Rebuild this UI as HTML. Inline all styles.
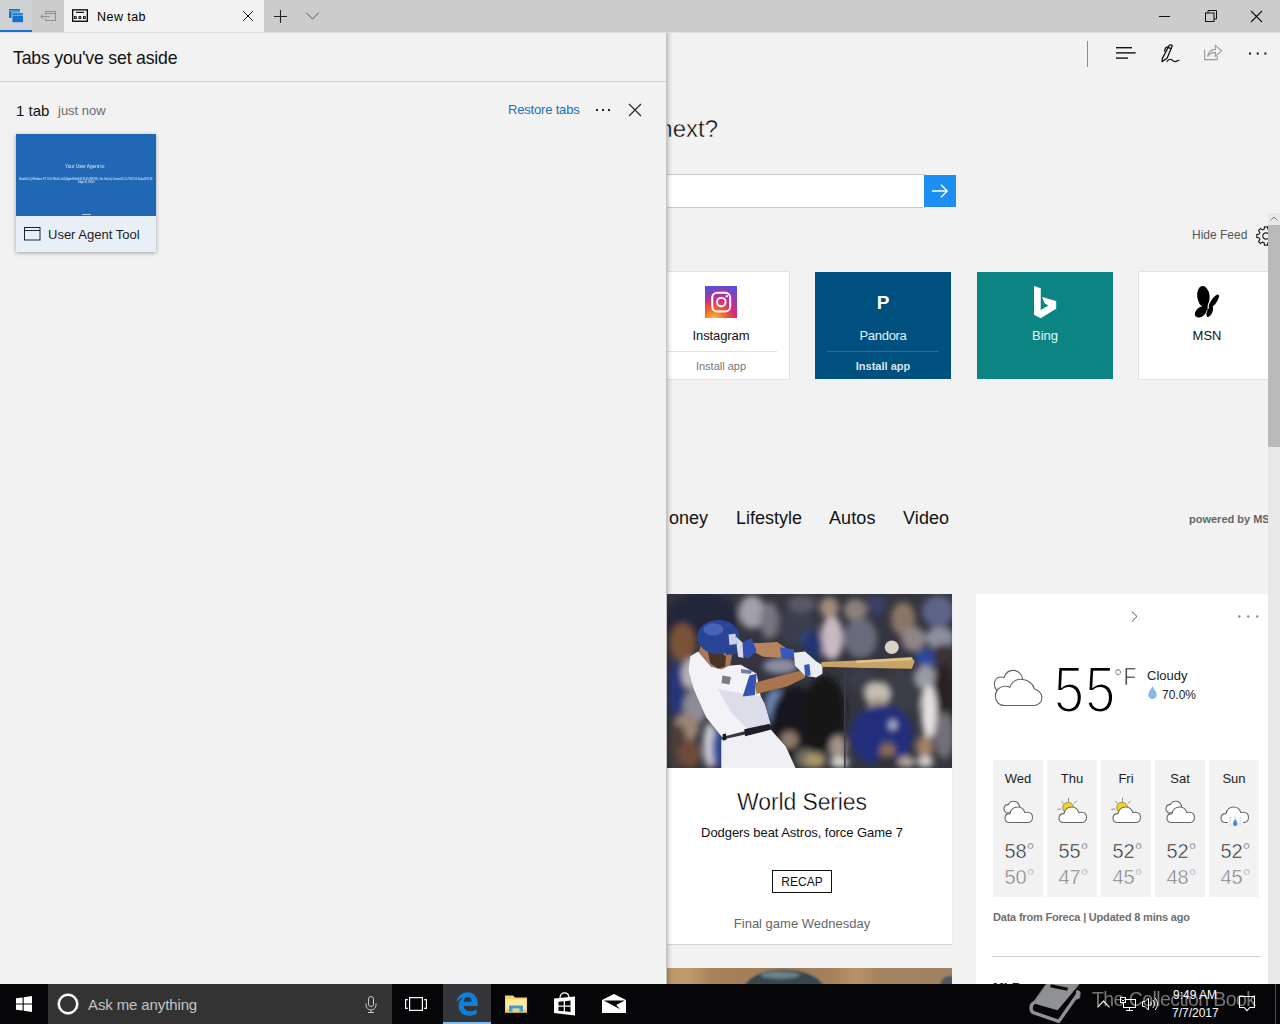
<!DOCTYPE html>
<html lang="en">
<head>
<meta charset="utf-8">
<title>New tab</title>
<style>
*{box-sizing:border-box;margin:0;padding:0}
html,body{width:1280px;height:1024px;overflow:hidden;background:#f2f2f2;font-family:"Liberation Sans",sans-serif;color:#000}
.abs,.t{position:absolute}
.t{white-space:nowrap;line-height:1;transform-origin:0 0}
#titlebar{left:0;top:0;width:1280px;height:32px;background:#cccccc}
#page{left:0;top:0;width:1280px;height:984px;background:#f2f2f2;overflow:hidden}
#panel{left:0;top:33px;width:667px;height:951px;background:#f2f2f2}
#taskbar{left:0;top:984px;width:1280px;height:40px;background:#060608;overflow:hidden}
svg{position:absolute;overflow:visible}
</style>
</head>
<body>

<!-- ================= PAGE (right side, behind panel) ================= -->
<div id="page" class="abs">

<!-- toolbar -->
<div class="abs" style="left:1087px;top:41px;width:1px;height:26px;background:#8a8a8a"></div>
<svg style="left:1116px;top:47px" width="20" height="12" viewBox="0 0 20 12" fill="#111"><rect x="0" y="0" width="16" height="1.4"/><rect x="0" y="5.2" width="19.6" height="1.4"/><rect x="0" y="10.4" width="12" height="1.4"/></svg>
<svg style="left:1161px;top:44px" width="19" height="19" viewBox="0 0 19 19" fill="none" stroke="#111" stroke-width="1.300" stroke-linejoin="round" stroke-linecap="round"><path d="M8.300 1.300C9 0.500 10.800 0.700 11.300 1.800L6.100 14.300L1.100 17.600L1.400 14.400Z"/><path d="M7 3.400L9.900 4.600"/><path d="M6.400 2.900L4.800 3.500L3.500 7"/><path d="M6 17.300C7.500 15.500 9 14.800 10.300 15.600C11.800 16.600 13 18 14.600 17.600C16 17.200 17 16.600 17.900 16.200" stroke-width="1.200"/></svg>
<svg style="left:1203.200px;top:43.400px" width="20" height="18" viewBox="0 0 20 18" fill="none" stroke="#9b9b9b" stroke-width="1.1" stroke-linejoin="miter"><path d="M1.6 6.4V16.6H14.2V13"/><path d="M4.6 13.4C5.4 8.8 8.4 6.6 12.4 6.4V2.4L18.6 7.8L12.4 13.2V9.4C9 9.4 6.6 10.4 4.6 13.4Z"/></svg>
<svg style="left:1249px;top:52px" width="18" height="3" viewBox="0 0 18 3" fill="#111"><rect x="0" y="0.5" width="2" height="2"/><rect x="7.7" y="0.5" width="2" height="2"/><rect x="15.4" y="0.5" width="2" height="2"/></svg>

<!-- where to next -->
<div class="t" id="wtn" style="right:562px;top:117px;font-size:24px;color:#000;-webkit-text-stroke:.45px #f2f2f2">Where to next?</div>
<!-- search box -->
<div class="abs" style="left:312px;top:174px;width:613px;height:34px;background:#fff;border:1px solid #c9c9c9"></div>
<div class="abs" style="left:924px;top:175px;width:32px;height:32px;background:#1e8ff2"></div>
<svg style="left:932px;top:184px" width="16" height="14" viewBox="0 0 16 14" fill="none" stroke="#fff" stroke-width="1.3"><path d="M0 7H15M9 0.8L15.2 7L9 13.2"/></svg>

<!-- hide feed -->
<div class="t" id="hidefeed" style="left:1192px;top:229px;font-size:12px;color:#555">Hide Feed</div>
<svg style="left:1256px;top:225px" width="20" height="22" viewBox="0 0 20 22" fill="none" stroke="#222" stroke-width="1.2"><circle cx="10" cy="11" r="3.2"/><path d="M8.6 1.8h2.8l.5 2.4 1.6.7 2-1.4 2 2-1.4 2 .7 1.6 2.4.5v2.8l-2.4.5-.7 1.6 1.4 2-2 2-2-1.4-1.6.7-.5 2.4H8.600l-.5-2.400-1.600-.7-2 1.400-2-2 1.400-2-.7-1.600-2.400-.5V9.600l2.400-.5.7-1.600-1.400-2 2-2 2 1.400 1.600-.7z"/></svg>

<!-- top sites tiles -->
<div class="abs" style="left:653px;top:271px;width:137px;height:109px;background:#fff;border:1px solid #e2e2e2"></div>
<svg style="left:705px;top:286px" width="32" height="32" viewBox="0 0 32 32">
  <defs>
    <radialGradient id="ig1" cx=".28" cy="1.08" r="1.15"><stop offset="0" stop-color="#fdd36f"/><stop offset=".14" stop-color="#f9a12f"/><stop offset=".34" stop-color="#f15f30"/><stop offset=".58" stop-color="#d82a78"/><stop offset=".82" stop-color="#9a38b4"/><stop offset="1" stop-color="#5a50d2"/></radialGradient>
    <radialGradient id="ig2" cx="0" cy="0" r=".6"><stop offset="0" stop-color="#4f55d8" stop-opacity=".9"/><stop offset="1" stop-color="#4f55d8" stop-opacity="0"/></radialGradient>
  </defs>
  <rect width="32" height="32" fill="url(#ig1)"/><rect width="32" height="32" fill="url(#ig2)"/>
  <rect x="7.200" y="6.800" width="18" height="18.600" rx="5" fill="none" stroke="#fff" stroke-width="2"/>
  <circle cx="16.300" cy="16" r="4.300" fill="none" stroke="#fff" stroke-width="2"/>
  <circle cx="21.800" cy="10.200" r="1.200" fill="#fff"/>
</svg>
<div class="t ctr" id="t_insta" style="left:653px;width:136px;top:329px;font-size:13px;color:#111;text-align:center;letter-spacing:-.1px">Instagram</div>
<div class="abs" style="left:665px;top:351px;width:112px;height:1px;background:#e3e3e3"></div>
<div class="t ctr" id="t_inst1" style="left:653px;width:136px;top:361px;font-size:11px;color:#767676;text-align:center">Install app</div>

<div class="abs" style="left:815px;top:272px;width:136px;height:107px;background:#00507f"></div>
<div class="t ctr" id="t_P" style="left:815px;width:136px;top:293px;font-size:19px;font-weight:bold;color:#fff;text-align:center">P</div>
<div class="t ctr" id="t_pand" style="left:815px;width:136px;top:329px;font-size:13px;color:#e6f1f8;text-align:center;letter-spacing:-.3px">Pandora</div>
<div class="abs" style="left:827px;top:351px;width:112px;height:1px;background:#2d6d95"></div>
<div class="t ctr" id="t_inst2" style="left:815px;width:136px;top:361px;font-size:11px;font-weight:bold;color:#d5e4ee;text-align:center">Install app</div>

<div class="abs" style="left:977px;top:272px;width:136px;height:107px;background:#0c8484"></div>
<svg style="left:1033.800px;top:285.800px" width="23" height="33" viewBox="0 0 23 33" fill="#fff"><path d="M0 0L6.800 2.200L6.700 23.900L14.400 19.500L10.600 17.300L8 11L22.200 15.100V22.700L6.600 32.200L0 28.800Z"/></svg>
<div class="t ctr" id="t_bing" style="left:977px;width:136px;top:329px;font-size:13px;color:#e8f6f6;text-align:center">Bing</div>

<div class="abs" style="left:1138px;top:271px;width:137px;height:109px;background:#fff;border:1px solid #e2e2e2"></div>
<svg style="left:1195px;top:286px" width="24" height="32" viewBox="0 0 24 32" fill="#000"><ellipse cx="8.400" cy="10.200" rx="6.200" ry="10.300" transform="rotate(-7 8.400 10.200)"/><path d="M4 17L12.800 8L12.600 24.500L9.500 24Z"/><ellipse cx="5.700" cy="26" rx="6.600" ry="4.500" transform="rotate(-40 5.700 26)"/><ellipse cx="18.900" cy="15.300" rx="8" ry="2.700" transform="rotate(-54 18.900 15.300)"/><ellipse cx="14.800" cy="25.600" rx="5.800" ry="2.600" transform="rotate(-66 14.800 25.600)"/></svg>
<div class="t ctr" id="t_msn" style="left:1139px;width:136px;top:329px;font-size:13px;color:#111;text-align:center">MSN</div>

<!-- news nav -->
<div class="t" id="n_money" style="right:572px;top:508.500px;font-size:18px;color:#111"><span style="margin-right:3px">M</span>oney</div>
<div class="t" id="n_life" style="left:736px;top:508.500px;font-size:18px;color:#111">Lifestyle</div>
<div class="t" id="n_autos" style="left:829px;top:508.500px;font-size:18px;color:#111;letter-spacing:.1px">Autos</div>
<div class="t" id="n_video" style="left:903px;top:508.500px;font-size:18px;color:#111;letter-spacing:.1px">Video</div>
<div class="t" id="n_pow" style="left:1189px;top:514px;font-size:11px;font-weight:bold;color:#666">powered by MSN</div>

<!-- news card 1 -->
<div class="abs" style="left:652px;top:594px;width:300px;height:350px;background:#fff;box-shadow:0 1px 1px rgba(0,0,0,.12)"></div>
<svg style="left:652px;top:594px" width="300" height="174" viewBox="0 0 300 174">
<defs><filter id="bl3" x="-10%" y="-10%" width="120%" height="120%"><feGaussianBlur stdDeviation="3"/></filter><filter id="bl1" x="-5%" y="-5%" width="110%" height="110%"><feGaussianBlur stdDeviation=".6"/></filter><clipPath id="cp1"><rect width="300" height="174"/></clipPath></defs>
<g clip-path="url(#cp1)"><rect width="300" height="174" fill="#34353f"/>
<g filter="url(#bl3)"><ellipse cx="50.5" cy="24.1" rx="36.5" ry="26.1" fill="#23263a"/><ellipse cx="30.5" cy="48.4" rx="13.0" ry="19.1" fill="#7a5238"/><ellipse cx="24.4" cy="95.3" rx="8.7" ry="27.9" fill="#27367a"/><ellipse cx="39.2" cy="79.7" rx="9.6" ry="15.6" fill="#b9b3b8"/><ellipse cx="43.5" cy="112.7" rx="12.2" ry="17.4" fill="#8f8c98"/><ellipse cx="100.0" cy="18.0" rx="13.0" ry="16.5" fill="#a3a0a8"/><ellipse cx="117.5" cy="26.6" rx="9.5" ry="18.2" fill="#77757f"/><ellipse cx="144.3" cy="32.8" rx="19.1" ry="17.4" fill="#3a3c50"/><ellipse cx="149.8" cy="10.2" rx="14.2" ry="8.7" fill="#5a5866"/><ellipse cx="157.4" cy="46.7" rx="7.8" ry="8.7" fill="#2b4696"/><ellipse cx="128.7" cy="71.9" rx="17.4" ry="7.8" fill="#8d8fa6"/><ellipse cx="123.5" cy="113.6" rx="10.4" ry="18.3" fill="#6d87b6"/><ellipse cx="144.3" cy="132.8" rx="26.1" ry="40.8" fill="#17171d"/><ellipse cx="34.0" cy="133.6" rx="13.0" ry="13.9" fill="#9a8474"/><ellipse cx="25.3" cy="151.8" rx="9.6" ry="21.8" fill="#4b3d38"/><ellipse cx="37.5" cy="159.6" rx="11.3" ry="14.0" fill="#6f4c3a"/><ellipse cx="57.9" cy="151.0" rx="6.5" ry="22.6" fill="#cfcfd6"/><ellipse cx="66.2" cy="154.4" rx="6.1" ry="19.1" fill="#2f4a9e"/><ellipse cx="137.4" cy="145.8" rx="8.7" ry="8.7" fill="#8f7a6a"/><ellipse cx="153.3" cy="164.0" rx="10.7" ry="9.6" fill="#6b675e"/><ellipse cx="177.2" cy="13.7" rx="9.6" ry="10.5" fill="#a38a7c"/><ellipse cx="179.8" cy="44.0" rx="11.3" ry="21.8" fill="#c9b9c3"/><ellipse cx="161.6" cy="51.9" rx="9.5" ry="13.9" fill="#24366f"/><ellipse cx="203.3" cy="16.2" rx="11.3" ry="11.2" fill="#8d8078"/><ellipse cx="208.5" cy="44.1" rx="16.5" ry="20.0" fill="#6a6a7c"/><ellipse cx="224.1" cy="11.1" rx="9.5" ry="9.6" fill="#3a3f6a"/><ellipse cx="251.1" cy="24.9" rx="12.1" ry="16.6" fill="#8a7666"/><ellipse cx="261.5" cy="45.0" rx="12.2" ry="12.2" fill="#8f8486"/><ellipse cx="286.1" cy="17.1" rx="15.9" ry="15.6" fill="#5f6488"/><ellipse cx="287.9" cy="44.1" rx="14.2" ry="11.3" fill="#8d8fa0"/><ellipse cx="274.5" cy="64.0" rx="11.3" ry="8.7" fill="#2a48a0"/><ellipse cx="291.3" cy="60.5" rx="10.7" ry="10.4" fill="#3a3036"/><ellipse cx="250.2" cy="97.1" rx="23.5" ry="22.6" fill="#3b3c44"/><ellipse cx="273.6" cy="83.2" rx="10.5" ry="12.1" fill="#9b9ba6"/><ellipse cx="172.8" cy="119.7" rx="20.8" ry="38.2" fill="#131318"/><ellipse cx="209.3" cy="84.9" rx="15.7" ry="10.4" fill="#3a3c48"/><ellipse cx="225.0" cy="99.7" rx="13.0" ry="11.3" fill="#c3bfb4"/><ellipse cx="225.0" cy="111.8" rx="9.6" ry="7.9" fill="#a89686"/><ellipse cx="229.8" cy="141.4" rx="31.7" ry="30.4" fill="#222e7c"/><ellipse cx="240.7" cy="131.0" rx="3.8" ry="4.7" fill="#b9c0e0"/><ellipse cx="291.9" cy="103.2" rx="11.3" ry="33.9" fill="#2a2022"/><ellipse cx="277.1" cy="118.3" rx="7.8" ry="27.3" fill="#e4e0e0"/><ellipse cx="292.2" cy="141.4" rx="9.8" ry="23.5" fill="#717078"/><ellipse cx="185.9" cy="153.6" rx="8.7" ry="12.1" fill="#a39388"/><ellipse cx="187.6" cy="168.3" rx="9.5" ry="5.2" fill="#d8d4d0"/><ellipse cx="162.8" cy="166.2" rx="10.8" ry="7.4" fill="#a89868"/><ellipse cx="235.4" cy="145.8" rx="9.5" ry="6.1" fill="#26357a"/><ellipse cx="235.4" cy="157.1" rx="7.9" ry="7.9" fill="#8a6a58"/><ellipse cx="235.4" cy="167.5" rx="13.9" ry="6.1" fill="#30323c"/><ellipse cx="272.8" cy="152.7" rx="8.7" ry="11.3" fill="#a08068"/><ellipse cx="273.2" cy="167.5" rx="8.2" ry="6.1" fill="#d2cec9"/><ellipse cx="254.6" cy="167.9" rx="8.6" ry="5.6" fill="#b3a79c"/></g>
<g filter="url(#bl1)"><rect x="192.0" y="74.5" width="1.600" height="100" fill="#3c3c46"/><polygon points="69.3,145.7 118.3,135.0 133.9,152.7 143.5,173.9 69.3,173.9" fill="#f0f0f4"/><polygon points="36.6,76.2 38.3,62.3 46.2,57.4 59.5,73.1 88.7,70.7 104.7,79.7 108.7,102.3 112.2,109.2 118.6,130.5 70.0,143.1 54.3,123.5 41.8,95.3" fill="#f3f3f7"/><polygon points="66.1,95.3 107.9,102.3 112.2,109.2 118.3,130.1 95.7,135.3 80.1,119.7" fill="#dcdde8"/><polygon points="97.4,81.4 104.7,79.7 103.0,100.9 90.8,102.6" fill="#3553b0"/><polygon points="70.500,81.500 79,83 77.500,90.500 69.500,89" fill="#7a7a88"/><polygon points="89,75 100,76.500 99,80 89,79" fill="#6f7cae"/><polygon points="70.5,140.2 74.0,139.5 74.5,145.7 71.0,146.8" fill="#1c1e28"/><polygon points="92.2,135.3 117.6,129.8 118.6,135.7 93.1,142.3" fill="#1c1e28"/><polygon points="100.9,49.3 125.2,48.1 136.0,55.4 134.3,64.1 111.3,62.7 102.6,58.3" fill="#b5855e"/><polygon points="103.5,88.4 151.3,75.9 153.4,83.5 135.7,92.2 104.4,100.0" fill="#a8744e"/><polygon points="90.5,48.4 99.5,44.2 104.7,57.1 96.0,64.4 90.5,62.3" fill="#3050b0"/><polygon points="127.9,53.3 142.1,55.4 143.0,63.5 129.6,64.4" fill="#3459c4"/><polygon points="48.8,50.1 66.1,55.4 80.1,60.6 78.3,71.0 69.6,75.4 59.5,73.1 47.0,58.0" fill="#a87858"/><polygon points="55.7,57.1 66.1,56.2 74.0,62.3 73.1,72.7 66.1,74.5 58.3,69.3" fill="#4a3428"/><ellipse cx="66.3" cy="43.0" rx="21.1" ry="17.1" fill="#2c4596"/><polygon points="71.4,55.4 90.5,50.1 91.4,58.8 74.8,60.9" fill="#2a408c"/><ellipse cx="61.4" cy="35.4" rx="10.0" ry="6.1" fill="#4662b6"/><polygon points="76.6,40.6 83.5,39.7 84.4,50.1 77.4,51.0" fill="#c9cfe4"/><polygon points="83.5,42.3 90.5,48.4 91.4,64.1 86.1,62.7" fill="#d5d8e6"/><polygon points="141.8,58.8 153.1,57.6 164.0,67.2 170.4,71.0 170.4,79.7 164.0,83.5 153.1,81.8 143.0,71.4" fill="#ecedf3"/><polygon points="152.2,71.0 157.4,70.1 158.6,81.4 153.1,82.3" fill="#3456b8"/><polygon points="169.4,67.9 204.1,66.5 259.8,63.0 262.6,67.5 259.8,74.7 204.1,73.8 169.4,72.7" fill="#c9a468"/><polygon points="204.1,66.8 258.9,63.7 260.1,66.1 204.1,68.9" fill="#e2c78c"/><ellipse cx="239.8" cy="53.3" rx="7" ry="6.800" fill="#dbd2c6"/></g>
</g></svg>

<div class="t" id="c_ws" style="left:652px;width:300px;text-align:center;top:790.500px;font-size:23px;color:#000;letter-spacing:-.12px;-webkit-text-stroke:.4px #fff">World Series</div>
<div class="t" id="c_sub" style="left:652px;width:300px;text-align:center;top:826px;font-size:13px;color:#111;letter-spacing:-.06px">Dodgers beat Astros, force Game 7</div>
<div class="abs" style="left:772px;top:870px;width:60px;height:23px;border:1px solid #111"></div>
<div class="t" id="c_recap" style="left:772px;width:60px;text-align:center;top:876px;font-size:12px;color:#111">RECAP</div>
<div class="t" id="c_final" style="left:652px;width:300px;text-align:center;top:917px;font-size:13px;color:#666">Final game Wednesday</div>
<!-- news card 2 (cut off) -->
<div class="abs" style="left:652px;top:968px;width:300px;height:20px;background:linear-gradient(to right,#b89468 0,#c09a6c 12%,#a98259 20%,#9c7a58 45%,#a5825c 60%,#b8946a 68%,#a5845f 75%,#a08060 100%);overflow:hidden">
  <div class="abs" style="left:92px;top:2px;width:80px;height:40px;border-radius:50% 50% 0 0;background:#37474d;filter:blur(1.200px)"></div>
  <div class="abs" style="left:108px;top:3px;width:40px;height:8px;border-radius:50%;background:#6b8288;filter:blur(1.500px)"></div>
  <div class="abs" style="left:288px;top:8px;width:20px;height:20px;border-radius:50%;background:#4a5a5e;filter:blur(1px)"></div>
</div>

<!-- weather card -->
<div class="abs" style="left:976px;top:594px;width:292px;height:400px;background:#fff"></div>
<svg style="left:1131px;top:611px" width="7" height="11" viewBox="0 0 7 11" fill="none" stroke="#555" stroke-width="1"><path d="M0.8 0.500L6 5.500L0.8 10.500"/></svg>
<svg style="left:1238px;top:615px" width="21" height="3" viewBox="0 0 21 3" fill="#8c8c8c"><circle cx="1.300" cy="1.500" r="1.200"/><circle cx="10.200" cy="1.500" r="1.200"/><circle cx="19.200" cy="1.500" r="1.200"/></svg>
<svg style="left:993px;top:669px" width="50" height="38" viewBox="0 0 50 38" fill="#fff" stroke="#646464" stroke-width="1.100"><path d="M3.800 21.600C1.800 19.500 1.300 17 1.300 15C1.300 11 4 8 7.500 8C8.800 8 10 8.200 11.100 8.500C12.500 4.200 16 1.400 20 1.400C25 1.400 29 5 29.700 9.900L20 20Z"/><path d="M11.100 36.500C5.500 36.500 2.400 32 2.400 27C2.400 21 7 17 12.500 17.200C14.500 17.200 16 17.700 16.900 18.300C18.500 13.500 22.500 10.200 27.800 10.200C34.500 10.200 40 14.500 41.500 20C46 21.500 48.900 24.500 48.900 28.700C48.900 33 45.500 36.500 41.200 36.500Z"/></svg>
<div class="t" id="w_55" style="left:1054px;top:657px;font-size:65px;color:#000;-webkit-text-stroke:2.200px #fff;letter-spacing:1.500px;transform:scaleX(.83)">55</div>
<div class="t" id="w_f" style="left:1114px;top:665px;font-size:24px;color:#222;-webkit-text-stroke:.6px #fff;transform:scaleX(.86);letter-spacing:1.500px">°F</div>
<div class="t" id="w_cloudy" style="left:1147px;top:669px;font-size:13px;color:#222">Cloudy</div>
<svg style="left:1148px;top:686px" width="9" height="13" viewBox="0 0 9 13" fill="#8bb6ea"><path d="M4.500 0C6 3.500 8.800 6 8.800 8.600A4.300 4.300 0 0 1 0.200 8.600C0.200 6 3 3.500 4.500 0Z"/></svg>
<div class="t" id="w_pct" style="left:1162px;top:689px;font-size:12px;color:#222">70.0%</div>
<div class="abs" style="left:993px;top:760px;width:50px;height:137px;background:#f2f2f2"></div>
<div class="t fd" id="fd0" style="left:993px;width:50px;text-align:center;top:772px;font-size:13px;color:#222">Wed</div>
<svg style="left:993px;top:796px" width="50" height="32" viewBox="0 0 50 32"><path d="M13.400 17C11.200 15.400 10.600 13.200 11.200 11.400C11.800 9.500 13.600 8.500 15.300 8.700C16.100 6.400 18.200 5.200 20.600 5.200C23.600 5.200 26 7.400 26.600 10.600L26.600 16Z" fill="#fff" stroke="#666" stroke-width="1.100"/><path d="M16.500 26.500C13 26.500 12 24 12 22.300C12 19.500 14 17.600 17 17.600C17.800 13.500 21 11 24.500 11C28.500 11 31 13.500 31.800 16.600C32.600 16.300 33.600 16.200 34.500 16.200C37.500 16.200 39.500 18.500 39.500 21.500C39.500 24.300 37.500 26.500 34.800 26.500Z" fill="#fff" stroke="#666" stroke-width="1.100"/></svg>
<div class="t fh" id="fh0" style="left:993px;width:50px;text-align:center;top:841px;font-size:20px;color:#222;-webkit-text-stroke:.5px #f2f2f2;padding-left:3px">58°</div>
<div class="t fl" id="fl0" style="left:993px;width:50px;text-align:center;top:867px;font-size:20px;color:#777;-webkit-text-stroke:.5px #f2f2f2;padding-left:3px">50°</div>
<div class="abs" style="left:1047px;top:760px;width:50px;height:137px;background:#f2f2f2"></div>
<div class="t fd" id="fd1" style="left:1047px;width:50px;text-align:center;top:772px;font-size:13px;color:#222">Thu</div>
<svg style="left:1047px;top:796px" width="50" height="32" viewBox="0 0 50 32"><g stroke="#8c8c8c" stroke-width="1" fill="none" stroke-linecap="round"><path d="M21.500 2.200V5.400M14.600 5.400L16.400 7.300M27.200 7.300L29.300 5.200M10.600 13.400L13.800 13"/></g><circle cx="21.100" cy="11.600" r="5.400" fill="#f2d21f" stroke="#8f8a4a" stroke-width=".9"/><path d="M16.500 26.500C13 26.500 12 24 12 22.300C12 19.500 14 17.600 17 17.600C17.800 13.500 21 11 24.500 11C28.500 11 31 13.500 31.800 16.600C32.600 16.300 33.600 16.200 34.500 16.200C37.500 16.200 39.500 18.500 39.500 21.500C39.500 24.300 37.500 26.500 34.800 26.500Z" fill="#fff" stroke="#666" stroke-width="1.100"/></svg>
<div class="t fh" id="fh1" style="left:1047px;width:50px;text-align:center;top:841px;font-size:20px;color:#222;-webkit-text-stroke:.5px #f2f2f2;padding-left:3px">55°</div>
<div class="t fl" id="fl1" style="left:1047px;width:50px;text-align:center;top:867px;font-size:20px;color:#777;-webkit-text-stroke:.5px #f2f2f2;padding-left:3px">47°</div>
<div class="abs" style="left:1101px;top:760px;width:50px;height:137px;background:#f2f2f2"></div>
<div class="t fd" id="fd2" style="left:1101px;width:50px;text-align:center;top:772px;font-size:13px;color:#222">Fri</div>
<svg style="left:1101px;top:796px" width="50" height="32" viewBox="0 0 50 32"><g stroke="#8c8c8c" stroke-width="1" fill="none" stroke-linecap="round"><path d="M21.500 2.200V5.400M14.600 5.400L16.400 7.300M27.200 7.300L29.300 5.200M10.600 13.400L13.800 13"/></g><circle cx="21.100" cy="11.600" r="5.400" fill="#f2d21f" stroke="#8f8a4a" stroke-width=".9"/><path d="M16.500 26.500C13 26.500 12 24 12 22.300C12 19.500 14 17.600 17 17.600C17.800 13.500 21 11 24.500 11C28.500 11 31 13.500 31.800 16.600C32.600 16.300 33.600 16.200 34.500 16.200C37.500 16.200 39.500 18.500 39.500 21.500C39.500 24.300 37.500 26.500 34.800 26.500Z" fill="#fff" stroke="#666" stroke-width="1.100"/></svg>
<div class="t fh" id="fh2" style="left:1101px;width:50px;text-align:center;top:841px;font-size:20px;color:#222;-webkit-text-stroke:.5px #f2f2f2;padding-left:3px">52°</div>
<div class="t fl" id="fl2" style="left:1101px;width:50px;text-align:center;top:867px;font-size:20px;color:#777;-webkit-text-stroke:.5px #f2f2f2;padding-left:3px">45°</div>
<div class="abs" style="left:1155px;top:760px;width:50px;height:137px;background:#f2f2f2"></div>
<div class="t fd" id="fd3" style="left:1155px;width:50px;text-align:center;top:772px;font-size:13px;color:#222">Sat</div>
<svg style="left:1155px;top:796px" width="50" height="32" viewBox="0 0 50 32"><path d="M13.400 17C11.200 15.400 10.600 13.200 11.200 11.400C11.800 9.500 13.600 8.500 15.300 8.700C16.100 6.400 18.200 5.200 20.600 5.200C23.600 5.200 26 7.400 26.600 10.600L26.600 16Z" fill="#fff" stroke="#666" stroke-width="1.100"/><path d="M16.500 26.500C13 26.500 12 24 12 22.300C12 19.500 14 17.600 17 17.600C17.800 13.500 21 11 24.500 11C28.500 11 31 13.500 31.800 16.600C32.600 16.300 33.600 16.200 34.500 16.200C37.500 16.200 39.500 18.500 39.500 21.500C39.500 24.300 37.500 26.500 34.800 26.500Z" fill="#fff" stroke="#666" stroke-width="1.100"/></svg>
<div class="t fh" id="fh3" style="left:1155px;width:50px;text-align:center;top:841px;font-size:20px;color:#222;-webkit-text-stroke:.5px #f2f2f2;padding-left:3px">52°</div>
<div class="t fl" id="fl3" style="left:1155px;width:50px;text-align:center;top:867px;font-size:20px;color:#777;-webkit-text-stroke:.5px #f2f2f2;padding-left:3px">48°</div>
<div class="abs" style="left:1209px;top:760px;width:50px;height:137px;background:#f2f2f2"></div>
<div class="t fd" id="fd4" style="left:1209px;width:50px;text-align:center;top:772px;font-size:13px;color:#222">Sun</div>
<svg style="left:1209px;top:796px" width="50" height="32" viewBox="0 0 50 32"><path d="M16.500 26.500C13 26.500 12 24 12 22.300C12 19.500 14 17.600 17 17.600C17.800 13.500 21 11 24.500 11C28.500 11 31 13.500 31.800 16.600C32.600 16.300 33.600 16.200 34.500 16.200C37.500 16.200 39.500 18.500 39.500 21.500C39.500 24.300 37.500 26.500 34.800 26.500Z" fill="#fff" stroke="#666" stroke-width="1.100"/><rect x="19" y="24" width="15" height="4" fill="#fff"/><g fill="#9cc4ea"><rect x="20.500" y="21" width="1.200" height="1.600"/><rect x="20.500" y="24" width="1.200" height="1.600"/><rect x="20.500" y="27" width="1.200" height="1.600"/><rect x="25.600" y="20.500" width="1.200" height="1.400"/><rect x="30.600" y="21" width="1.200" height="1.600"/><rect x="30.600" y="24" width="1.200" height="1.600"/><rect x="30.600" y="27" width="1.200" height="1.600"/></g><path d="M26.200 22.600C27.200 25 28.500 26.200 28.500 27.700A2.300 2.300 0 0 1 23.900 27.700C23.900 26.200 25.200 25 26.200 22.600Z" fill="#4a90cc"/></svg>
<div class="t fh" id="fh4" style="left:1209px;width:50px;text-align:center;top:841px;font-size:20px;color:#222;-webkit-text-stroke:.5px #f2f2f2;padding-left:3px">52°</div>
<div class="t fl" id="fl4" style="left:1209px;width:50px;text-align:center;top:867px;font-size:20px;color:#777;-webkit-text-stroke:.5px #f2f2f2;padding-left:3px">45°</div>

<div class="t" id="w_data" style="left:993px;top:912px;font-size:11px;font-weight:bold;color:#707070;letter-spacing:-.2px">Data from Foreca | Updated 8 mins ago</div>
<div class="abs" style="left:992px;top:956px;width:268px;height:1px;background:#cfcfcf"></div>
<div class="t" id="w_mlb" style="left:993px;top:981px;font-size:13px;font-weight:bold;color:#222">MLB</div>

<!-- scrollbar -->
<div class="abs" style="left:1268px;top:213px;width:12px;height:771px;background:#e8e8e8"></div>
<div class="abs" style="left:1268px;top:225px;width:12px;height:222px;background:#b9b9b9"></div>
<svg style="left:1270px;top:216px" width="8" height="5" viewBox="0 0 8 5" fill="none" stroke="#777" stroke-width="1"><path d="M0.500 4.500L4 1L7.500 4.500"/></svg>
<!--PAGE-->
</div>

<!-- ================= TITLE BAR ================= -->
<div id="titlebar" class="abs">

<div class="abs" style="left:0;top:0;width:32px;height:32px;background:#cfd2d5"></div>
<div class="abs" style="left:0;top:30px;width:32px;height:2px;background:#1272cf"></div>
<!-- set-aside tabs icon -->
<svg style="left:8px;top:8px" width="16" height="16" viewBox="0 0 16 16">
  <rect x="1" y="1" width="11" height="9" fill="#1272cf"/>
  <rect x="1" y="2.6" width="11" height="1" fill="#7db6ea"/>
  <rect x="3.6" y="4.4" width="12" height="10.2" fill="#cfd2d5"/>
  <rect x="4.4" y="5.2" width="10.6" height="9" fill="#1272cf"/>
  <rect x="4.4" y="6.8" width="10.6" height="1" fill="#7db6ea"/>
</svg>
<!-- set tabs aside icon (disabled) -->
<svg style="left:40px;top:10px" width="16" height="14" viewBox="0 0 16 14" fill="none" stroke="#8d8d8d" stroke-width="1">
  <path d="M5.500 4.500V1.500H15.500V10.500H5.500V8.500M5.500 3.500H15.500"/>
  <path d="M9.500 6.500H0.800M3 4.300L0.800 6.500L3 8.700"/>
</svg>
<!-- active tab -->
<div class="abs" style="left:64px;top:0;width:200px;height:33px;background:#f2f2f2"></div>
<svg style="left:72px;top:9px" width="17" height="14" viewBox="0 0 17 14">
  <rect x="0.650" y="0.850" width="14.700" height="11.400" fill="none" stroke="#000" stroke-width="1.300"/>
  <rect x="4" y="2.800" width="8" height="1.100" fill="#000"/>
  <g fill="#000"><rect x="2" y="7.200" width="2.700" height="2.700"/><rect x="6.500" y="7.200" width="2.700" height="2.700"/><rect x="11" y="7.200" width="2.700" height="2.700"/></g>
  <g fill="#d8d8d8"><rect x="2.900" y="8.100" width=".9" height=".9"/><rect x="7.400" y="8.100" width=".9" height=".9"/><rect x="11.900" y="8.100" width=".9" height=".9"/></g>
</svg>
<div class="t" id="newtab" style="left:97px;top:11px;font-size:12.5px;letter-spacing:.45px">New tab</div>
<svg style="left:243px;top:11px" width="10" height="10" viewBox="0 0 10 10" stroke="#222" stroke-width="1" fill="none"><path d="M0 0L10 10M10 0L0 10"/></svg>
<svg style="left:274px;top:10px" width="13" height="13" viewBox="0 0 13 13" stroke="#222" stroke-width="1.1" fill="none"><path d="M6.5 0V13M0 6.5H13"/></svg>
<svg style="left:306px;top:12px" width="13" height="8" viewBox="0 0 13 8" stroke="#555" stroke-width="1" fill="none"><path d="M0.3 0.8L6.5 7L12.7 0.8"/></svg>
<!-- window controls -->
<svg style="left:1159px;top:16px" width="11" height="1" viewBox="0 0 11 1"><rect width="11" height="1" fill="#111"/></svg>
<svg style="left:1205px;top:10px" width="12" height="12" viewBox="0 0 12 12" fill="none" stroke="#111" stroke-width="1"><rect x="0.5" y="3" width="8.5" height="8.5"/><path d="M3 3V0.5H11.5V9H9"/></svg>
<svg style="left:1251px;top:11px" width="11" height="11" viewBox="0 0 11 11" stroke="#111" stroke-width="1.1" fill="none"><path d="M0 0L11 11M11 0L0 11"/></svg>
<!--TITLEBAR-->
</div>
<div class="abs" style="left:0;top:32px;width:1280px;height:1px;background:#dedede"></div>

<!-- ================= SET ASIDE PANEL ================= -->
<div id="panel" class="abs">

<div class="t" id="p_title" style="left:13px;top:17px;font-size:17.700px;color:#111;letter-spacing:-.2px">Tabs you've set aside</div>
<div class="abs" style="left:0;top:48px;width:667px;height:1px;background:#cfcfcf"></div>
<div class="t" id="p_1tab" style="left:16px;top:70px;font-size:15px;color:#111">1 tab</div>
<div class="t" id="p_just" style="left:58px;top:71px;font-size:13px;color:#6a6a6a">just now</div>
<div class="t" id="p_restore" style="left:508px;top:70px;font-size:13px;color:#1a6fb5;letter-spacing:-.18px">Restore tabs</div>
<svg style="left:596px;top:76px" width="14" height="2" viewBox="0 0 14 2" fill="#222"><rect x="0" y="0" width="2" height="2"/><rect x="6" y="0" width="2" height="2"/><rect x="12" y="0" width="2" height="2"/></svg>
<svg style="left:629px;top:71px" width="12" height="12" viewBox="0 0 12 12" stroke="#222" stroke-width="1.1" fill="none"><path d="M0 0L12 12M12 0L0 12"/></svg>
<!-- thumbnail card -->
<div class="abs" style="left:16px;top:101px;width:140px;height:118px;background:#e8eff7;box-shadow:0 1px 4px rgba(0,0,0,.35)">
  <div class="abs" style="left:0;top:0;width:140px;height:82px;background:#2067b5;overflow:hidden">
    <div class="t" id="th1" style="left:49.300px;top:30.100px;font-size:40px;color:#e4eefa;transform:scale(.1175)">Your User Agent is:</div>
    <div class="t" id="th2" style="left:2.750px;top:42.500px;font-size:40px;color:#eaf2fb;transform:scale(.061,.085)">Mozilla/5.0 (Windows NT 10.0; Win64; x64) AppleWebKit/537.36 (KHTML, like Gecko) Chrome/52.0.2743.116 Safari/537.36</div>
    <div class="t" id="th3" style="left:61.600px;top:46.100px;font-size:40px;color:#eaf2fb;transform:scale(.061,.085)">Edge/15.15063</div>
    <div class="abs" style="left:66px;top:80px;width:9px;height:1px;background:#a9c9ea"></div>
  </div>
  <svg style="left:8px;top:93px" width="17" height="14" viewBox="0 0 17 14" fill="none" stroke="#1c2430" stroke-width="1"><rect x="0.5" y="0.5" width="15.5" height="12.5"/><path d="M0.5 3.5H16"/></svg>
  <div class="t" id="p_uat" style="left:32px;top:94px;font-size:13px;color:#1a1d26">User Agent Tool</div>
</div>
<div class="abs" style="left:666px;top:0;width:1px;height:951px;background:#c4c4c4"></div>
<div class="abs" style="left:667px;top:0;width:6px;height:951px;background:linear-gradient(to right,rgba(0,0,0,.2),rgba(0,0,0,.07) 40%,rgba(0,0,0,0))"></div>
<!--PANEL-->
</div>

<!-- ================= TASKBAR ================= -->
<div id="taskbar" class="abs">

<svg style="left:16px;top:12px" width="16" height="16" viewBox="0 0 16 16" fill="#fff"><path d="M0 2.300L6.600 1.400V7.450H0ZM7.700 1.250L16 0V7.450H7.700ZM0 8.550H6.600V14.600L0 13.700ZM7.700 8.550H16V16L7.700 14.750Z"/></svg>
<div class="abs" style="left:48px;top:0;width:344px;height:40px;background:#333333"></div>
<svg style="left:57px;top:9px" width="22" height="22" viewBox="0 0 22 22" fill="none"><circle cx="11" cy="11" r="9.200" stroke="#fff" stroke-width="2.400"/><circle cx="11" cy="11" r="10.600" stroke="#9a9a9a" stroke-width=".6"/></svg>
<div class="t" id="k_ask" style="left:88px;top:13px;font-size:15px;color:#c4c4c4;letter-spacing:-.12px">Ask me anything</div>
<svg style="left:365px;top:12px" width="12" height="17" viewBox="0 0 12 17" fill="none" stroke="#c8c8c8" stroke-width="1"><rect x="3.500" y="0.500" width="5" height="10" rx="2.500"/><path d="M1 7.500V9A5 5 0 0 0 11 9V7.500M6 14V16M3 16.500H9"/></svg>
<!-- task view -->
<svg style="left:405px;top:13px" width="22" height="14" viewBox="0 0 22 14" fill="none" stroke="#fff" stroke-width="1.200"><rect x="4.600" y="0.600" width="12.800" height="12.800"/><path d="M2.800 2.600H0.600V11.400H2.800M19.200 2.600H21.400V11.400H19.200"/></svg>
<!-- edge -->
<div class="abs" style="left:443px;top:0;width:48px;height:40px;background:#343538"></div>
<div class="abs" style="left:443px;top:37.500px;width:48px;height:2.500px;background:#7ebcf0"></div>
<svg style="left:456px;top:8px" width="22" height="24" viewBox="0 0 22 24" fill="#0f80dc"><path d="M0.300 10.800C1 4.500 5.800 0.300 11.600 0.300C18 0.300 21.700 5 21.700 11.500V14H7.600C7.900 17.500 10.600 19.300 14 19.300C16.400 19.300 18.600 18.600 20.600 17.400V22C18.400 23.200 15.800 23.800 13 23.800C6.600 23.800 2.600 19.800 2.600 13.800C2.600 10.400 4.400 7.400 7.200 5.800C4 6.200 1.600 8.200 0.300 10.800ZM7.700 9.800H15.400C15.400 6.800 14 5 11.600 5C9.400 5 7.900 7 7.700 9.800Z"/></svg>
<!-- explorer -->
<svg style="left:505px;top:11px" width="22" height="18" viewBox="0 0 22 18"><path d="M0 0.500H8L10 2.500H22V17.500H0Z" fill="#f5d46a"/><rect x="1" y="4" width="20" height="10" fill="#fbe9a0"/><path d="M4 17.500V10.500H18V17.500H14.500V13.500H7.500V17.500Z" fill="#3f9be0"/><rect x="0" y="16.500" width="22" height="1.200" fill="#e0b94a"/></svg>
<!-- store -->
<svg style="left:554px;top:8px" width="21" height="24" viewBox="0 0 21 24"><path d="M6 6C6 2.500 8 0.800 10.500 0.800C13 0.800 15 2.500 15 6" fill="none" stroke="#fff" stroke-width="1.200"/><path d="M0 6.500L21 4.500V23.500L0 21Z" fill="#fff"/><path d="M4.500 9.800L9.700 9.300V13.600H4.500ZM11 9.200L16.500 8.600V13.600H11ZM4.500 14.800H9.700V19.200L4.500 18.700ZM11 14.800H16.500V19.900L11 19.300Z" fill="#060608"/></svg>
<!-- mail -->
<svg style="left:602px;top:10px" width="24" height="19" viewBox="0 0 24 19"><path d="M0 6L12 0L24 6V19H0Z" fill="#fff"/><path d="M1.700 6.600L22.800 6.600L14.200 11.100L18.100 15.200Z" fill="#060608"/></svg>
<!-- watermark -->
<svg style="left:1028px;top:0" width="54" height="40" viewBox="0 0 54 40"><g fill="#8f9194" stroke="#8f9194" stroke-linejoin="round" stroke-linecap="round"><path d="M19.500 -1L52 -1L29.500 25.800L5.500 18.800Z" stroke-width="1"/><path d="M6 18.800C2.200 20.500 2.200 27.500 5.500 28.600L30.800 37.400L50.600 9" fill="none" stroke-width="3.400"/><path d="M49 6.500L51.800 7.500V13.500L49 15Z" stroke-width="1"/></g><path d="M23 0.200L40.200 3.700L39 6.800L22 3.200Z" fill="#0a0a0c"/></svg>
<div class="t" id="k_wm" style="left:1092px;top:5.500px;font-size:19.500px;color:#9a9a9a;opacity:.75;letter-spacing:-.58px">The Collection Book</div>
<!-- tray -->
<svg style="left:1097px;top:16px" width="13" height="8" viewBox="0 0 13 8" fill="none" stroke="#fff" stroke-width="1.100"><path d="M0.500 7.300L6.500 1L12.500 7.300"/></svg>
<svg style="left:1120px;top:13px" width="16" height="14" viewBox="0 0 16 14" fill="none" stroke="#fff" stroke-width="1"><rect x="3.500" y="2.500" width="12" height="8"/><path d="M9.500 10.500V13M6 13.500H13"/><rect x="0.500" y="0.500" width="5" height="5" fill="#060608"/><path d="M1.500 2.500L3 4L4.600 2.300"/></svg>
<svg style="left:1142px;top:13px" width="17" height="14" viewBox="0 0 17 14" fill="none" stroke="#fff" stroke-width="1"><path d="M0.500 4.500H3L6.500 1V13L3 9.500H0.500Z"/><path d="M8.500 5A3 3 0 0 1 8.500 9M10.800 3A6 6 0 0 1 10.800 11M13.200 1A9 9 0 0 1 13.200 13"/></svg>
<div class="t" id="k_time" style="left:1173px;top:5px;font-size:12px;color:#fff">9:49 AM</div>
<div class="t" id="k_date" style="left:1172px;top:23px;font-size:12px;color:#fff">7/7/2017</div>
<svg style="left:1239px;top:12px" width="16" height="16" viewBox="0 0 16 16" fill="none" stroke="#fff" stroke-width="1.100"><path d="M0.550 0.550H15.450V11.450H10.800L8 14.600L5.200 11.450H0.550Z"/></svg>
<div class="abs" style="left:1275px;top:0;width:1px;height:40px;background:#4a4a4a"></div>
<!--TASKBAR-->
</div>

</body>
</html>
